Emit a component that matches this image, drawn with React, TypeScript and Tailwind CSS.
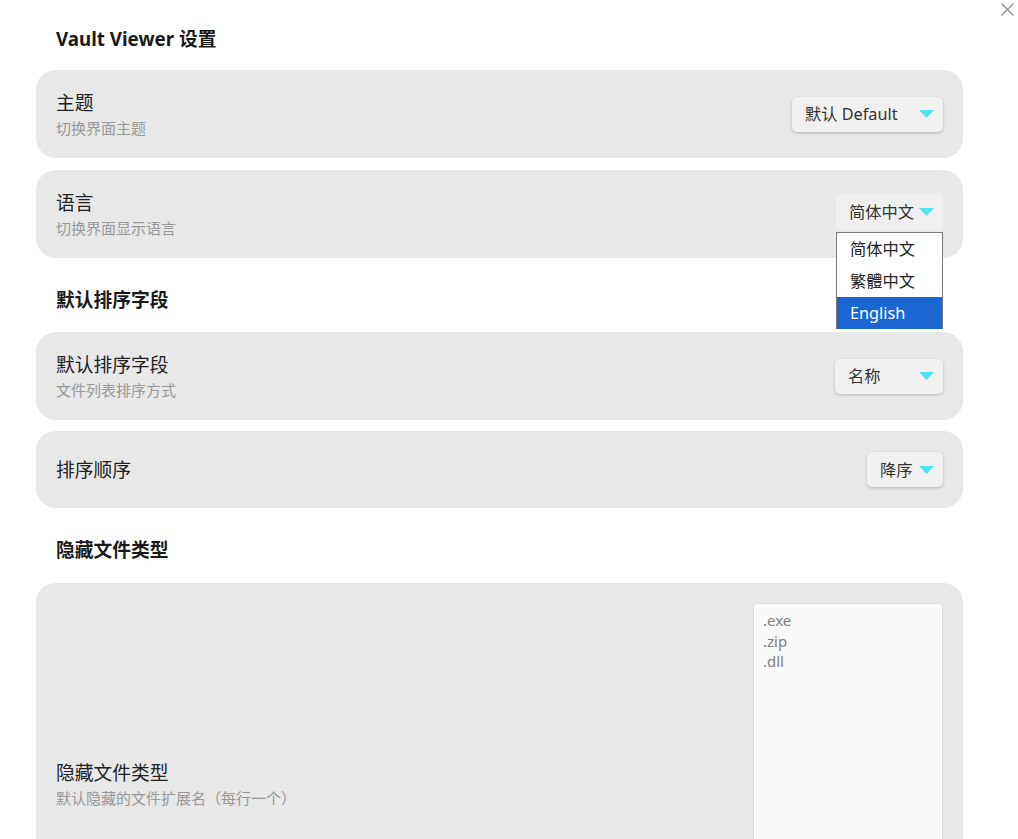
import React from "react";

const Tri = () => (
  <svg width="15" height="8" viewBox="0 0 15 8" className="shrink-0">
    <polygon points="0,0 15,0 7.5,8" fill="#4fe3f3" />
  </svg>
);

function Select({ label, w, shadow = true }: { label: string; w: string; shadow?: boolean }) {
  return (
    <div
      className={`${w} h-[35px] rounded-[5px] bg-[#f0f0f0] flex items-center pl-[13px] pr-[9px] text-[16.25px] leading-[20px] text-[#333] ${
        shadow ? "shadow-[0_1px_3px_rgba(0,0,0,0.22)]" : ""
      }`}
    >
      <span className="whitespace-nowrap">{label}</span>
      <span className="ml-auto flex items-center">
        <Tri />
      </span>
    </div>
  );
}

function Label({ title, sub }: { title: string; sub?: string }) {
  return (
    <div className="flex flex-col">
      <div className="text-[18.75px] leading-[24px] text-[#222]">{title}</div>
      {sub && <div className="mt-[3px] text-[15px] leading-[20px] text-[#999]">{sub}</div>}
    </div>
  );
}

export default function App() {
  return (
    <div className="relative w-[1018px] h-[839px] overflow-hidden bg-white font-['Noto_Sans','Noto_Sans_CJK_SC',sans-serif]">
      <svg
        className="absolute left-[1001px] top-[3px]"
        width="13"
        height="13"
        viewBox="0 0 13 13"
      >
        <path d="M0.5 0.5 L12.5 12.5 M12.5 0.5 L0.5 12.5" stroke="#8a8a8a" strokeWidth="1.2" fill="none" />
      </svg>

      <div className="w-[927px] ml-[36px] pt-[26px] flex flex-col">
        <h1 className="px-[20px] h-[26px] leading-[26px] text-[18.75px] font-bold text-[#1a1a1a] mb-[18px]">
          Vault Viewer 设置
        </h1>

        <div className="h-[88px] rounded-[20px] bg-[#e8e8e8] px-[20px] flex items-center justify-between">
          <Label title="主题" sub="切换界面主题" />
          <Select label="默认 Default" w="w-[151px]" />
        </div>

        <div className="mt-[12px] h-[88px] rounded-[20px] bg-[#e8e8e8] px-[20px] flex items-center justify-between">
          <Label title="语言" sub="切换界面显示语言" />
          <div className="relative mb-[4px]">
            <div className="w-[107px] h-[36px] rounded-[5px] bg-[#efefef] flex items-center pl-[13px] pr-[9px] text-[16.25px] leading-[20px] text-[#333]">
              <span className="whitespace-nowrap">简体中文</span>
              <span className="ml-auto flex items-center">
                <Tri />
              </span>
            </div>
            <div className="absolute left-0 top-[38px] z-10 w-[107px] bg-white border border-[#7a7a7a] border-b-0 text-[16.25px] text-[#222]">
              <div className="h-[32px] pl-[13px] flex items-center">简体中文</div>
              <div className="h-[32px] pl-[13px] flex items-center">繁體中文</div>
              <div className="h-[32px] pl-[13px] flex items-center bg-[#1a66d2] text-white">English</div>
            </div>
          </div>
        </div>

        <h2 className="mt-[29px] mb-[19px] px-[20px] h-[26px] leading-[26px] text-[18.75px] font-bold text-[#1a1a1a]">
          默认排序字段
        </h2>

        <div className="h-[88px] rounded-[20px] bg-[#e8e8e8] px-[20px] flex items-center justify-between">
          <Label title="默认排序字段" sub="文件列表排序方式" />
          <Select label="名称" w="w-[108px]" />
        </div>

        <div className="mt-[11px] h-[77px] rounded-[20px] bg-[#e8e8e8] px-[20px] flex items-center justify-between">
          <Label title="排序顺序" />
          <Select label="降序" w="w-[76px]" />
        </div>

        <h2 className="mt-[29px] mb-[20px] px-[20px] h-[26px] leading-[26px] text-[18.75px] font-bold text-[#1a1a1a]">
          隐藏文件类型
        </h2>

        <div className="rounded-[20px] bg-[#e8e8e8] px-[20px] py-[20px] flex items-center justify-between">
          <Label title="隐藏文件类型" sub="默认隐藏的文件扩展名（每行一个）" />
          <textarea
            readOnly
            defaultValue={".exe\n.zip\n.dll"}
            className="w-[190px] h-[362px] resize-none rounded-[4px] bg-[#fafafa] border border-[#dcdcdc] pl-[9px] pt-[6px] text-[15px] leading-[20.5px] text-[#808080] outline-none font-['Noto_Sans','Noto_Sans_CJK_SC',sans-serif]"
          />
        </div>
      </div>
    </div>
  );
}
